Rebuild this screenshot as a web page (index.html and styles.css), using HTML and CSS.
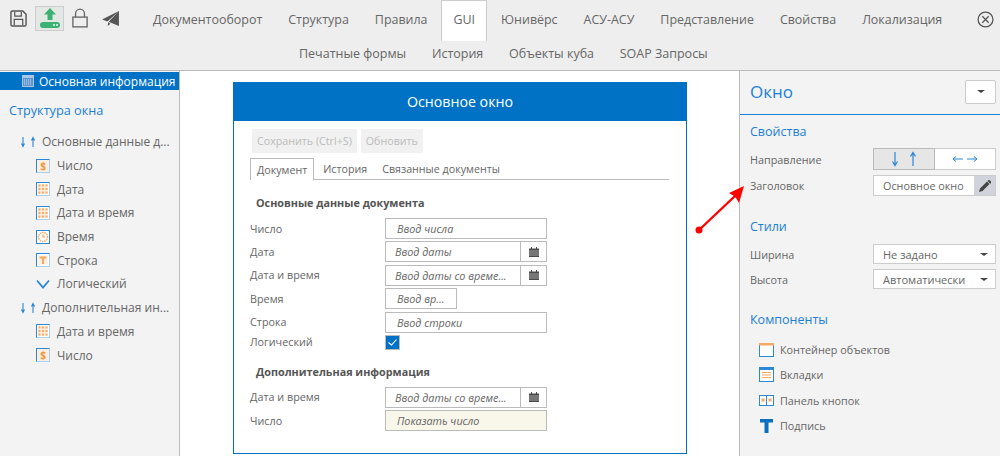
FILE: index.html
```html
<!DOCTYPE html>
<html lang="ru">
<head>
    <meta charset="UTF-8">
    <title>Основное окно</title>
    <link rel="stylesheet" href="styles.css">
</head>
<body>

    <svg class="defs" width="0" height="0">
        <symbol id="i-date" viewBox="0 0 14 14"><rect x=".5" y=".5" width="13" height="13" fill="#fff" stroke="#a8d0f0"/><path d="M.5 13.500V.5h13" fill="none" stroke="#2b87d8"/><rect x="2" y="2" width="10" height="10" fill="#fdeedf"/><g fill="#f9a85f"><rect x="2.500" y="2.500" width="2" height="2"/><rect x="6" y="2.500" width="2" height="2"/><rect x="9.500" y="2.500" width="2" height="2"/><rect x="2.500" y="6" width="2" height="2"/><rect x="6" y="6" width="2" height="2"/><rect x="9.500" y="6" width="2" height="2"/><rect x="2.500" y="9.500" width="2" height="2"/><rect x="6" y="9.500" width="2" height="2"/><rect x="9.500" y="9.500" width="2" height="2"/></g></symbol>
        <symbol id="i-time" viewBox="0 0 14 14"><rect x=".5" y=".5" width="13" height="13" fill="#fff" stroke="#2b87d8"/><circle cx="7" cy="7" r="4.500" fill="#fff" stroke="#f9a85f" stroke-width="1.500" stroke-dasharray="1.400 .8"/><path d="M7 4.500V7h2" fill="none" stroke="#f0953c"/></symbol>
        <symbol id="i-str" viewBox="0 0 14 14"><rect x=".5" y=".5" width="13" height="13" fill="#fff" stroke="#a8d0f0"/><path d="M.5 13.500V.5h13" fill="none" stroke="#2b87d8"/><rect x="2.500" y="2.500" width="9" height="9" fill="#fdeedf"/><path d="M3.500 3.500h7v2H8v5.500H6V5.500H3.500z" fill="#f9a85f"/></symbol>
        <symbol id="i-bool" viewBox="0 0 14 14"><path d="M1 3.500l6 7 6-7" fill="none" stroke="#2b87d8" stroke-width="1.800"/></symbol>
        <symbol id="i-arrows" viewBox="0 0 16 12"><path d="M3 1v9M1.500 7.500L3 10.500l1.500-3M13 11V2M11.500 4.500L13 1.500l1.500 3" fill="none" stroke="#2b87d8" stroke-width="1.100"/></symbol>
        <symbol id="i-cal" viewBox="0 0 10 10"><path d="M0 1.500h2V0h1v1.500h4V0h1v1.500h2V10H0z" fill="#4a4a4a"/><path d="M0 4h10M0 6h10M0 8h10" stroke="#ddd" stroke-width=".6"/></symbol>
    </svg>

    <header class="topbar">
        <div class="row-main">
            <div class="tools">
                <svg class="tool" width="17" height="17" viewBox="0 0 18 18"><path d="M1 2.500q0-1.500 1.500-1.500h11l3.500 3.500v11q0 1.500-1.500 1.500h-13q-1.500 0-1.500-1.500z" fill="none" stroke="#555" stroke-width="1.500"/><path d="M5 2v4.500h7V2M4.500 16v-6h9v6" fill="none" stroke="#555" stroke-width="1.300"/></svg>
                <span class="tool-active">
                    <svg width="22" height="22" viewBox="0 0 22 22"><path d="M11 1l6 6.500h-3.500V13h-5V7.500H5z" fill="#3bb273"/><rect x="1" y="15" width="20" height="6" rx="3" fill="#3bb273"/><circle cx="15" cy="18" r=".9" fill="#fff"/><circle cx="18" cy="18" r=".9" fill="#fff"/></svg>
                </span>
                <svg class="tool" width="16" height="20" viewBox="0 0 18 22"><path d="M4 10V6a5 5 0 0 1 10 0v4" fill="none" stroke="#666" stroke-width="1.500"/><rect x="1" y="10" width="16" height="11" fill="none" stroke="#666" stroke-width="1.500"/></svg>
                <svg class="tool tool-send" width="17" height="15" viewBox="0 0 18 16"><path d="M18 0L0 9l5 2 1 0zM18 0L7 11.500 18 16zM6.500 12L6 16l3-2.500z" fill="#555"/></svg>
            </div>
            <nav class="tabs-main">
                <a>Документооборот</a>
                <a>Структура</a>
                <a>Правила</a>
                <a class="active">GUI</a>
                <a>Юнивёрс</a>
                <a>АСУ-АСУ</a>
                <a>Представление</a>
                <a>Свойства</a>
                <a>Локализация</a>
            </nav>
            <svg class="close" width="17" height="17" viewBox="0 0 16 16"><circle cx="8" cy="8" r="7" fill="none" stroke="#555" stroke-width="1.200"/><path d="M5 5l6 6M11 5l-6 6" stroke="#555" stroke-width="1.200"/></svg>
        </div>
        <nav class="tabs-sub">
            <a>Печатные формы</a>
            <a>История</a>
            <a>Объекты куба</a>
            <a>SOAP Запросы</a>
        </nav>
    </header>

    <main class="layout">
        <aside class="left">
            <div class="selected">
                <svg width="12" height="12" viewBox="0 0 12 12"><rect width="12" height="12" fill="#a9c6e6"/><path d="M1 3h10v8H1z" fill="#5f94cc"/><path d="M2 5h8M2 7h8M2 9h8" stroke="#cfe0f2" stroke-dasharray="1 1"/></svg>
                Основная информация
            </div>
            <h3 class="tree-title">Структура окна</h3>
            <ul class="tree">
                <li class="group"><svg width="16" height="12"><use href="#i-arrows"/></svg><span>Основные данные д...</span></li>
                <li><span class="ico-num">$</span>Число</li>
                <li><svg width="14" height="14"><use href="#i-date"/></svg>Дата</li>
                <li><svg width="14" height="14"><use href="#i-date"/></svg>Дата и время</li>
                <li><svg width="14" height="14"><use href="#i-time"/></svg>Время</li>
                <li><svg width="14" height="14"><use href="#i-str"/></svg>Строка</li>
                <li><svg width="14" height="14"><use href="#i-bool"/></svg>Логический</li>
                <li class="group"><svg width="16" height="12"><use href="#i-arrows"/></svg><span>Дополнительная ин...</span></li>
                <li><svg width="14" height="14"><use href="#i-date"/></svg>Дата и время</li>
                <li><span class="ico-num">$</span>Число</li>
            </ul>
        </aside>

        <section class="center">
            <div class="window">
                <div class="window-title">Основное окно</div>
                <div class="window-body">
                    <div class="actions">
                        <button>Сохранить (Ctrl+S)</button>
                        <button>Обновить</button>
                    </div>
                    <div class="doc-tabs">
                        <a class="active">Документ</a>
                        <a>История</a>
                        <a>Связанные документы</a>
                    </div>
                    <h4 class="form-head">Основные данные документа</h4>
                    <div class="form-row"><label>Число</label><div class="field">Ввод числа</div></div>
                    <div class="form-row"><label>Дата</label><div class="field with-btn"><span>Ввод даты</span><i><svg width="10" height="10"><use href="#i-cal"/></svg></i></div></div>
                    <div class="form-row"><label>Дата и время</label><div class="field with-btn"><span>Ввод даты со време...</span><i><svg width="10" height="10"><use href="#i-cal"/></svg></i></div></div>
                    <div class="form-row"><label>Время</label><div class="field short">Ввод вр...</div></div>
                    <div class="form-row"><label>Строка</label><div class="field">Ввод строки</div></div>
                    <div class="form-row row-check"><label>Логический</label><div class="check"><svg width="9" height="7" viewBox="0 0 9 7"><path d="M.5 3.500l3 2.500 5-5.500" fill="none" stroke="#fff" stroke-width="1.100"/></svg></div></div>
                    <h4 class="form-head head-two">Дополнительная информация</h4>
                    <div class="form-row"><label>Дата и время</label><div class="field with-btn"><span>Ввод даты со време...</span><i><svg width="10" height="10"><use href="#i-cal"/></svg></i></div></div>
                    <div class="form-row"><label>Число</label><div class="field readonly">Показать число</div></div>
                </div>
            </div>
        </section>

        <aside class="right">
            <div class="right-head">
                <span class="right-title">Окно</span>
                <button class="menu-btn"><b class="caret"></b></button>
            </div>
            <div class="right-body">
                <h3 class="sec sec-first">Свойства</h3>
                <div class="prop">
                    <label>Направление</label>
                    <div class="dir">
                        <span class="on"><svg width="26" height="16" viewBox="0 0 26 16"><path d="M4 1v13M1.500 10.500L4 14.500l2.500-4M22 15V2M19.500 5.500L22 1.500l2.500 4" fill="none" stroke="#2b87d8" stroke-width="1.200"/></svg></span>
                        <span><svg width="26" height="8" viewBox="0 0 26 8"><path d="M1 4h10M4 1.500L1 4l3 2.500M15 4h10M22 1.500L25 4l-3 2.500" fill="none" stroke="#2b87d8"/></svg></span>
                    </div>
                </div>
                <div class="prop prop-title">
                    <label>Заголовок</label>
                    <div class="title-edit"><span>Основное окно</span><i><svg width="12" height="12" viewBox="0 0 12 12"><path d="M0 12l1-3.500L8 1.500 10.500 4l-7 7zM9 .5q1-1 2 0l.7.7q1 1 0 2l-.5.500L8.500 1z" fill="#444"/></svg></i></div>
                </div>
                <h3 class="sec">Стили</h3>
                <div class="prop prop-sel">
                    <label>Ширина</label>
                    <div class="select">Не задано<b class="caret"></b></div>
                </div>
                <div class="prop prop-sel">
                    <label>Высота</label>
                    <div class="select">Автоматически<b class="caret"></b></div>
                </div>
                <h3 class="sec">Компоненты</h3>
                <ul class="comps">
                    <li><svg width="15" height="14" viewBox="0 0 15 14"><rect x=".5" y=".5" width="14" height="13" fill="#fff" stroke="#2b87d8"/><rect width="15" height="2.500" fill="#f9a85f"/></svg>Контейнер объектов</li>
                    <li><svg width="15" height="15" viewBox="0 0 15 15"><rect x=".5" y=".5" width="14" height="14" fill="#fff" stroke="#2b87d8"/><rect x="1" y="1" width="13" height="2" fill="#2b87d8"/><path d="M3 5.500h9M3 8h9M3 10.500h9" stroke="#f9a85f" stroke-width="1.200"/></svg>Вкладки</li>
                    <li><svg width="15" height="11" viewBox="0 0 15 11"><rect x=".5" y=".5" width="14" height="10" fill="#fff" stroke="#2b87d8"/><path d="M7.500 0v11" stroke="#2b87d8"/><rect x="2.500" y="3.500" width="3" height="3" fill="#f9a85f"/><rect x="9.500" y="3.500" width="3" height="3" fill="#f9a85f"/></svg>Панель кнопок</li>
                    <li><svg width="15" height="14" viewBox="0 0 15 14"><path d="M1 0h13v3.500H9.500V14h-4V3.500H1z" fill="#0a70c0"/></svg>Подпись</li>
                </ul>
            </div>
        </aside>
    </main>

    <svg class="pointer" width="70" height="60" viewBox="0 0 70 60">
        <circle cx="19" cy="50" r="3.500" fill="#f00"/>
        <path d="M19 50L55 16" stroke="#f00" stroke-width="2.400"/>
        <path d="M64 6L49 13l5 3 2 2 3 5z" fill="#f00"/>
    </svg>

</body>
</html>
```

FILE: styles.css
```css
* {
    box-sizing: border-box;
}
html, body {
    height: 100%;
}
body {
    margin: 0;
    font-family: "Open Sans", sans-serif;
    font-size: 10.800px;
    color: #666;
    background-color: #fff;
    overflow: hidden;
    position: relative;
}
.defs {
    position: absolute;
}
h3, h4, ul {
    margin: 0;
    padding: 0;
    font-weight: normal;
}
li {
    list-style: none;
}

/* top bar */
.topbar {
    height: 71px;
    background-color: #eee;
    border-bottom: 1px solid #bbb;
}
.row-main {
    display: flex;
    height: 41px;
}
.tools {
    flex: none;
    display: flex;
    align-items: center;
    width: 141px;
    padding: 0 0 5px 10px;
}
.tool {
    flex: none;
}
.tool-active {
    display: flex;
    align-items: center;
    justify-content: center;
    width: 29px;
    height: 25px;
    margin-left: 8px;
    background-color: #e4e8e4;
    border: 1px solid #ccc;
}
.tool-active + .tool {
    margin-left: 8px;
}
.tool-send {
    margin-left: 14px;
}
.tabs-main {
    display: flex;
}
.tabs-main a {
    display: flex;
    align-items: center;
    padding: 0 12px 3px;
    margin-right: 2px;
    font-size: 12.450px;
    color: #666;
    white-space: nowrap;
}
.tabs-main a.active {
    background-color: #fff;
    border: 1px solid #ccc;
    border-bottom: none;
    padding: 0 11px 3px;
}
.close {
    margin: 11px 6px 0 auto;
}
.tabs-sub {
    display: flex;
    gap: 25.700px;
    padding: 4px 0 0 299px;
}
.tabs-sub a {
    font-size: 12.500px;
    color: #666;
}

/* three columns */
.layout {
    display: flex;
    height: 385px;
}
.left {
    flex: none;
    width: 180px;
    background-color: #f3f3f3;
    border-right: 1px solid #bbb;
}
.selected {
    display: flex;
    align-items: center;
    gap: 5px;
    height: 18px;
    margin-top: 1px;
    padding-left: 22px;
    background-color: #0072c6;
    color: #fff;
    font-size: 12px;
    white-space: nowrap;
}
.tree-title {
    margin: 11px 0 0 9px;
    font-size: 12.700px;
    line-height: 18px;
    color: #1c7fd6;
}
.tree {
    padding: 11px 0 0 36px;
}
.tree li {
    display: flex;
    align-items: center;
    gap: 7px;
    height: 23.700px;
    font-size: 12px;
    white-space: nowrap;
}
.tree li.group {
    margin-left: -16px;
    gap: 6px;
}
.ico-num {
    flex: none;
    width: 14px;
    height: 14px;
    background-color: #fdeedf;
    border: 1px solid #2b87d8;
    border-right-color: #a8d0f0;
    border-bottom-color: #a8d0f0;
    color: #f0953c;
    font-size: 10px;
    font-weight: 700;
    line-height: 12px;
    text-align: center;
}

/* window preview */
.center {
    flex: 1;
    padding: 11px 0 0 53px;
}
.window {
    width: 454px;
    height: 372px;
    border: 1px solid #0072c6;
}
.window-title {
    height: 38px;
    padding-bottom: 1px;
    background-color: #0072c6;
    color: #fff;
    font-size: 14.200px;
    line-height: 37px;
    text-align: center;
}
.window-body {
    padding: 8px 17px 0 16px;
}
.actions {
    display: flex;
    gap: 4px;
    padding-left: 2px;
}
.actions button {
    height: 24px;
    padding: 0 5px;
    border: none;
    background-color: #f1f1f1;
    color: #bbb;
    font-family: inherit;
    font-size: 10.700px;
}
.doc-tabs {
    display: flex;
    height: 22px;
    margin-top: 5px;
    border-bottom: 1px solid #bbb;
}
.doc-tabs a {
    padding: 4px 7px 0;
    margin-right: 1px;
    white-space: nowrap;
    font-size: 10.700px;
}
.doc-tabs a.active {
    height: 22px;
    margin-right: 2px;
    padding: 4px 6px 0;
    background-color: #fff;
    border: 1px solid #bbb;
    border-bottom: none;
}
.form-head {
    margin: 15px 0 7px 6px;
    font-size: 10.800px;
    font-weight: 700;
    line-height: 16px;
    color: #555;
}
.head-two {
    margin-top: 14px;
    margin-bottom: 7px;
}
.form-row {
    display: flex;
    align-items: center;
    height: 21px;
    margin-bottom: 2.400px;
}
.form-row label {
    flex: none;
    width: 135px;
    margin-top: -1px;
}
.field {
    width: 162px;
    height: 100%;
    padding-left: 11px;
    border: 1px solid #bbb;
    font-style: italic;
    line-height: 19px;
    white-space: nowrap;
}
.field.short {
    width: 72px;
}
.field.readonly {
    background-color: #f9f6ea;
}
.field.with-btn {
    display: flex;
    padding-left: 0;
}
.field.with-btn span {
    flex: 1;
    padding-left: 9px;
}
.field.with-btn i {
    display: flex;
    align-items: center;
    justify-content: center;
    width: 26px;
    border-left: 1px solid #bbb;
}
.row-check {
    height: 15px;
    margin-bottom: 0;
}
.check {
    display: flex;
    align-items: center;
    justify-content: center;
    width: 15px;
    height: 15px;
    background-color: #0072c6;
    border: 1px solid #bbb;
}

/* properties */
.right {
    flex: none;
    width: 261px;
    background-color: #f3f3f3;
    border-left: 1px solid #bbb;
}
.right-head {
    display: flex;
    align-items: center;
    justify-content: space-between;
    height: 44px;
    padding: 0 4px 2px 10px;
    border-bottom: 1px solid #1c7fd6;
}
.right-title {
    font-size: 17px;
    color: #1c7fd6;
}
.menu-btn {
    display: flex;
    align-items: center;
    justify-content: center;
    width: 31px;
    height: 24px;
    background-color: #fff;
    border: 1px solid #ccc;
    border-radius: 2px;
}
.caret {
    width: 0;
    height: 0;
    border-top: 3px solid #444;
    border-left: 4px solid transparent;
    border-right: 4px solid transparent;
}
.right-body {
    padding: 0 4px 0 10px;
}
.sec {
    margin: 22px 0 0;
    font-size: 12.500px;
    line-height: 18px;
    color: #1c7fd6;
}
.sec-first {
    margin-top: 8px;
}
.prop {
    display: flex;
    align-items: center;
    justify-content: space-between;
    margin-top: 7px;
}
.dir {
    display: flex;
    width: 123px;
    height: 22px;
}
.dir span {
    display: flex;
    align-items: center;
    justify-content: center;
    flex: 1;
    background-color: #fff;
    border: 1px solid #ccc;
    border-left: none;
}
.dir span.on {
    background-color: #e6e6e6;
    border: 1px solid #bbb;
}
.prop-title {
    margin-top: 5px;
}
.title-edit {
    display: flex;
    width: 123px;
    height: 21px;
    background-color: #fff;
    border: 1px solid #ccc;
    line-height: 19px;
}
.title-edit span {
    flex: 1;
    padding-left: 9px;
    white-space: nowrap;
}
.title-edit i {
    display: flex;
    align-items: center;
    justify-content: center;
    width: 21px;
    background-color: #d0d3dc;
}
.prop-sel {
    margin-top: 5px;
}
.sec + .prop-sel {
    margin-top: 8px;
}
.select {
    display: flex;
    align-items: center;
    justify-content: space-between;
    width: 123px;
    height: 20px;
    padding: 0 7px 0 9px;
    background-color: #fff;
    border: 1px solid #ccc;
    font-size: 11px;
}
.comps {
    padding: 8px 0 0 9px;
}
.comps li {
    display: flex;
    align-items: center;
    gap: 6px;
    height: 25.300px;
}
.comps svg {
    flex: none;
}

/* red annotation arrow */
.pointer {
    position: absolute;
    left: 680px;
    top: 180px;
}
```
